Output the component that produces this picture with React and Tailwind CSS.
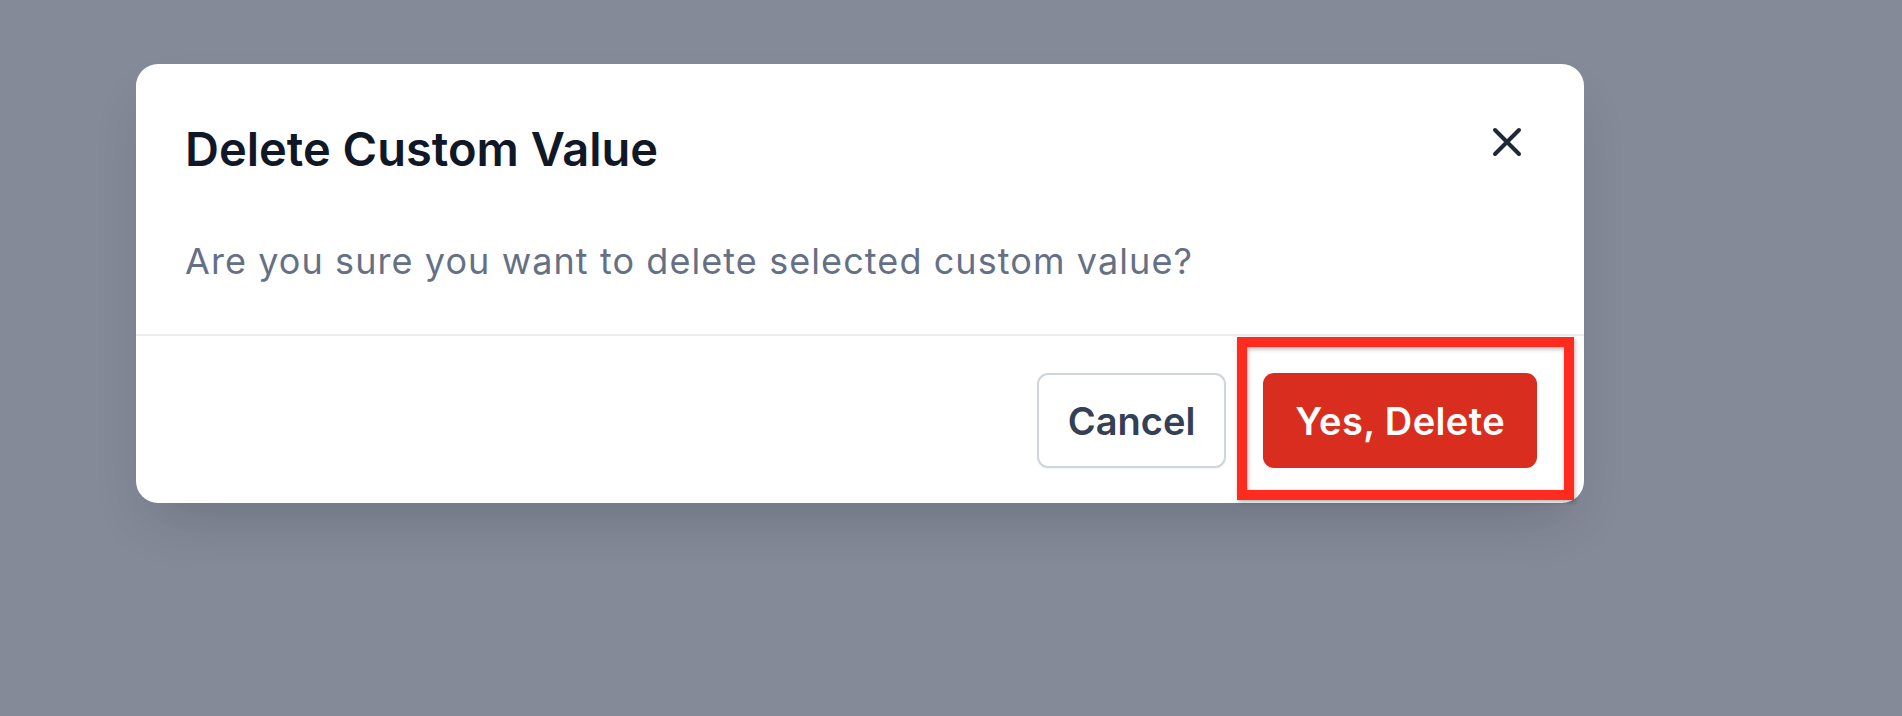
import React from 'react';

const CloseIcon = () => (
  <svg width="30" height="30" viewBox="0 0 30 30" fill="none" aria-hidden="true">
    <path d="M3 3L27 27M27 3L3 27" stroke="#1d2939" strokeWidth="4" strokeLinecap="round" />
  </svg>
);

const App = () => {
  return (
    <div
      className="relative w-[1902px] h-[716px] overflow-hidden bg-[#858a98] pl-[136px] pt-[64px]"
      style={{ fontFamily: 'Inter, "Noto Sans", sans-serif' }}
    >
      {/* Modal */}
      <div className="w-[1448px] rounded-[22px] bg-white shadow-[0_28px_56px_-16px_rgba(16,24,40,0.2)]">
        <div className="relative px-[49px] pt-[56px] pb-[46px]">
          <h2 className="text-[47px] leading-[58px] font-semibold text-[#101828]">
            Delete Custom Value
          </h2>
          <button
            type="button"
            className="absolute right-[62px] top-[63px] flex items-center justify-center"
          >
            <CloseIcon />
          </button>
          <p className="mt-[56px] text-[36px] leading-[54px] tracking-[0.03em] text-[#667085]">
            Are you sure you want to delete selected custom value?
          </p>
        </div>

        {/* Footer */}
        <div className="flex justify-end gap-[37px] border-t-2 border-[#eaecf0] pt-[37px] pb-[35px] pr-[47px]">
          <button
            type="button"
            className="h-[95px] px-[29px] flex items-center rounded-[11px] border-2 border-[#d0d5dd] bg-white text-[38px] leading-[46px] font-semibold text-[#344054] shadow-[0_1px_2px_rgba(16,24,40,0.05)]"
          >
            Cancel
          </button>
          <button
            type="button"
            className="h-[95px] px-[32px] flex items-center rounded-[11px] bg-[#d92d20] text-[38px] leading-[46px] font-semibold tracking-[0.01em] text-white"
          >
            Yes, Delete
          </button>
        </div>
      </div>

      {/* Annotation highlight */}
      <div className="absolute left-[1237px] top-[337px] w-[337px] h-[163px] border-[10px] border-[#fe2b1e] shadow-[1px_2px_4px_rgba(0,0,0,0.3),inset_1px_2px_4px_rgba(0,0,0,0.3)] pointer-events-none" />
    </div>
  );
};

export default App;
